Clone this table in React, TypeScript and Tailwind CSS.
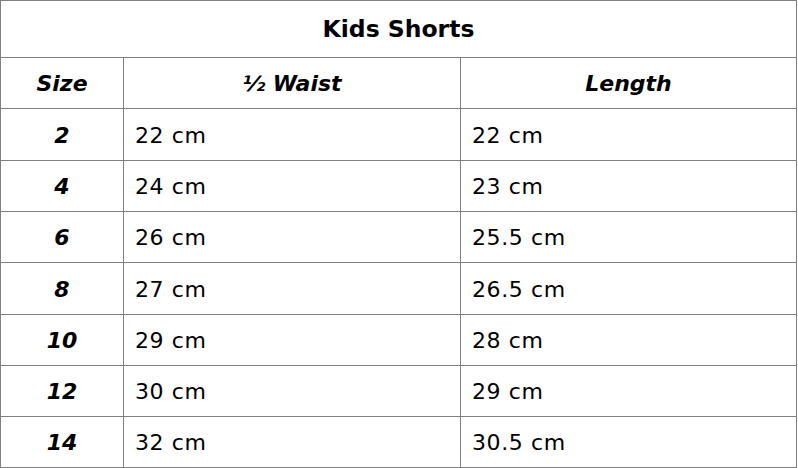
import React from "react";

const rows: [string, string, string][] = [
  ["2", "22 cm", "22 cm"],
  ["4", "24 cm", "23 cm"],
  ["6", "26 cm", "25.5 cm"],
  ["8", "27 cm", "26.5 cm"],
  ["10", "29 cm", "28 cm"],
  ["12", "30 cm", "29 cm"],
  ["14", "32 cm", "30.5 cm"],
];

const heights = ["h-[52px]", "h-[51px]", "h-[51px]", "h-[52px]", "h-[51px]", "h-[51px]", "h-[51px]"];

export default function App() {
  return (
    <div className="w-[798px] h-[468px] bg-white text-black font-['DejaVu_Sans',sans-serif]">
      <div className="w-[797px] border-l border-t border-[#808080] grid grid-cols-[123px_337px_336px]">
        <div className="col-span-3 h-[57px] border-r border-b border-[#808080] flex items-center justify-center text-[23.5px] font-bold pt-[1px]">
          Kids Shorts
        </div>
        <div className="h-[51px] border-r border-b border-[#808080] flex items-center justify-center text-[22px] font-bold italic">
          Size
        </div>
        <div className="h-[51px] border-r border-b border-[#808080] flex items-center justify-center text-[22px] font-bold italic">
          ½ Waist
        </div>
        <div className="h-[51px] border-r border-b border-[#808080] flex items-center justify-center text-[22px] font-bold italic">
          Length
        </div>
        {rows.map((r, i) => (
          <React.Fragment key={r[0]}>
            <div className={`${heights[i]} border-r border-b border-[#808080] flex items-center justify-center text-[22px] font-bold italic pt-[1px]`}>
              {r[0]}
            </div>
            <div className={`${heights[i]} border-r border-b border-[#808080] flex items-center pl-[11px] text-[22px] tracking-[0.6px] pt-[1px]`}>
              {r[1]}
            </div>
            <div className={`${heights[i]} border-r border-b border-[#808080] flex items-center pl-[11px] text-[22px] tracking-[0.6px] pt-[1px]`}>
              {r[2]}
            </div>
          </React.Fragment>
        ))}
      </div>
    </div>
  );
}
